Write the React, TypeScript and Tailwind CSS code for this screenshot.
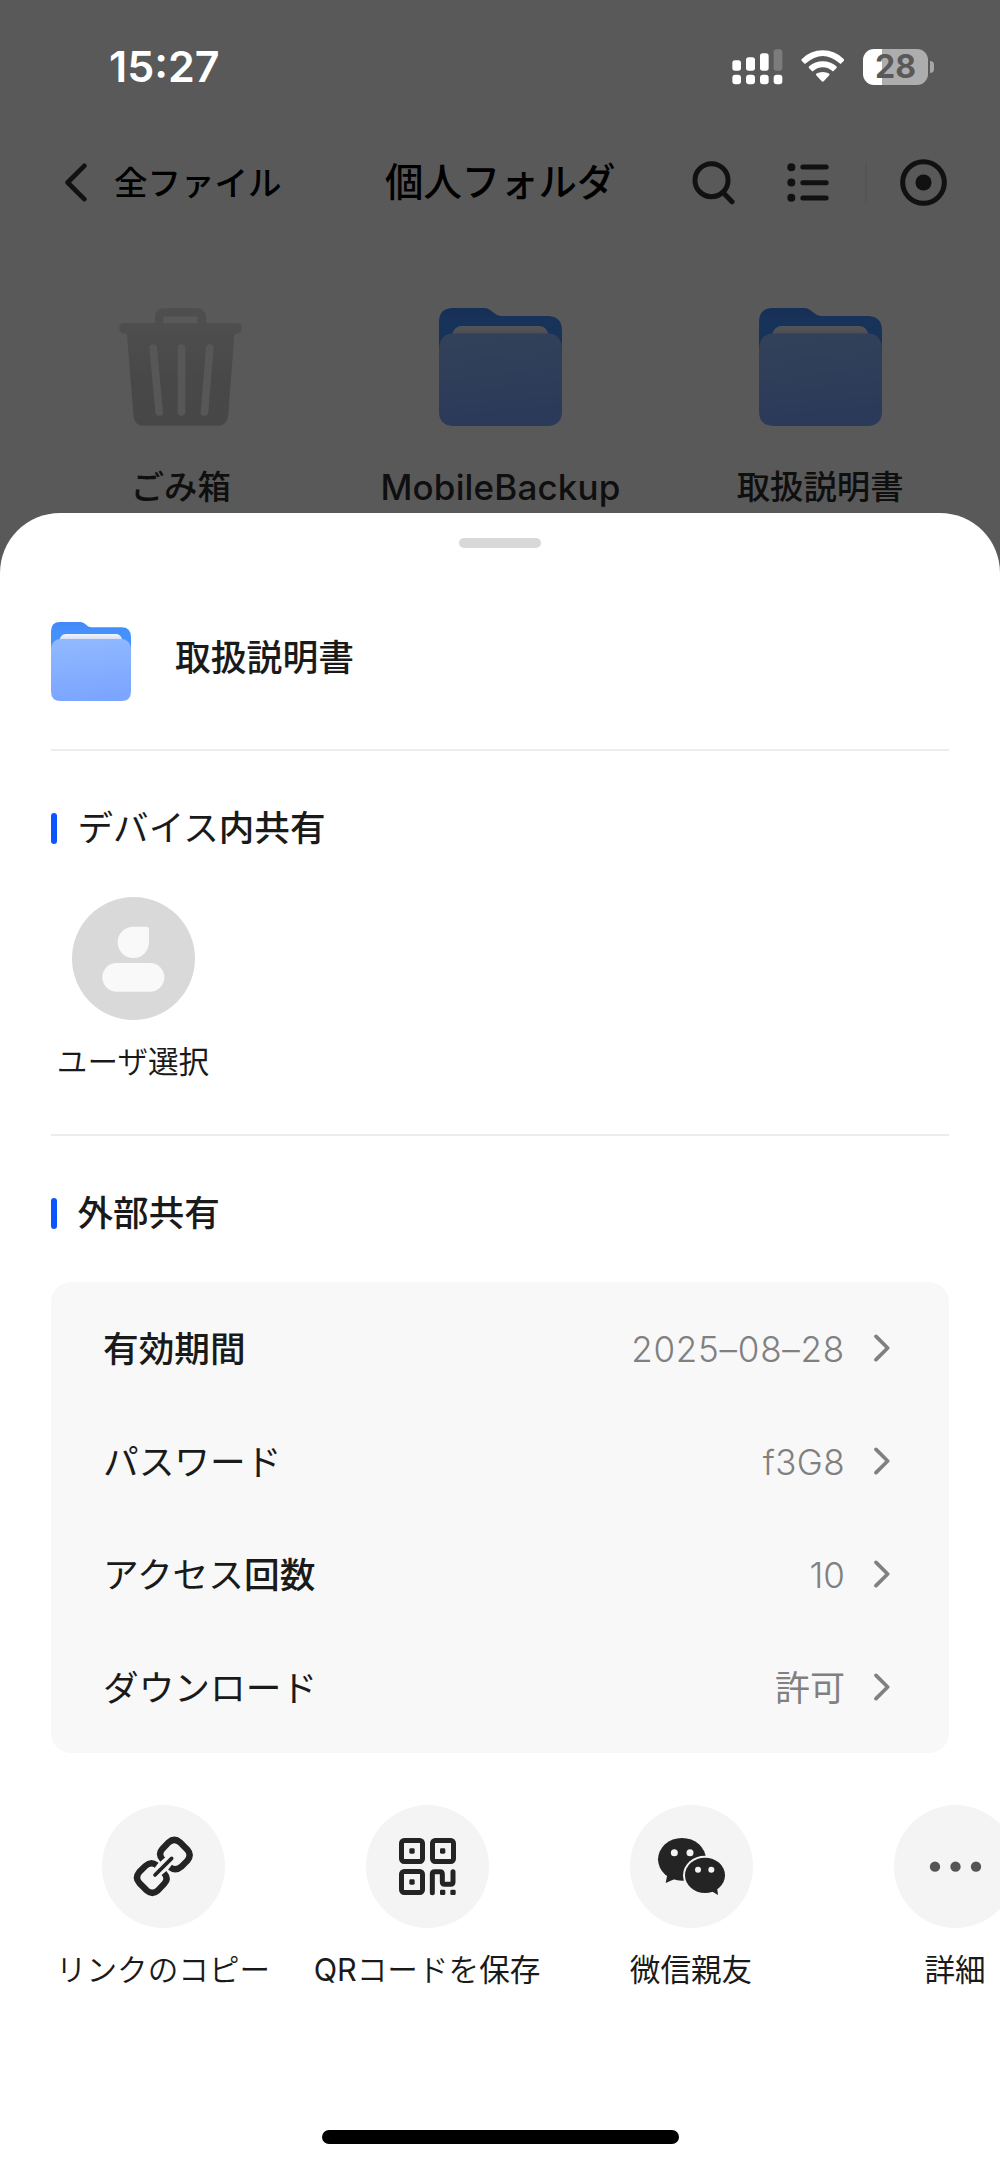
import React from 'react';

const rows = [
  { label: '有効期間', value: '2025–08–28', valueClass: 'font-[350] tracking-[0.75px]' },
  { label: 'パスワード', value: 'f3G8', valueClass: 'font-[350] tracking-[0.4px]' },
  { label: 'アクセス回数', value: '10', valueClass: 'font-[350]' },
  { label: 'ダウンロード', value: '許可', valueClass: 'font-normal' },
];

// kana runs are set one step lighter than the kanji next to them
function MixedText({ text, kanaClass }: { text: string; kanaClass: string }) {
  const parts = text.split(/([\u3040-\u30ff]+)/).filter(Boolean);
  return (
    <>
      {parts.map((part, i) => (
        <span key={i} className={/[\u3040-\u30ff]/.test(part) ? kanaClass : undefined}>{part}</span>
      ))}
    </>
  );
}

function FolderIcon({ className }: { className?: string }) {
  return (
    <svg viewBox="0 0 370 354" preserveAspectRatio="none" className={className}>
      <defs>
        <linearGradient id="folder-back" x1="0" y1="0" x2="0" y2="1">
          <stop offset="0" stopColor="#4287f5" />
          <stop offset="0.3" stopColor="#4592ff" />
        </linearGradient>
        <linearGradient id="folder-front" x1="0" y1="0" x2="0.15" y2="1">
          <stop offset="0" stopColor="#91baff" />
          <stop offset="1" stopColor="#7ca5ff" />
        </linearGradient>
        <linearGradient id="folder-paper" x1="0" y1="0" x2="0" y2="1">
          <stop offset="0" stopColor="#f0f4fc" />
          <stop offset="1" stopColor="#c9d5ee" />
        </linearGradient>
      </defs>
      <path d="M0 42Q0 0 42 0H136Q147 0 155 7L171 19Q178 24 188 24H326Q370 24 370 68V160H0Z" fill="url(#folder-back)" />
      <path d="M38 90Q42 54 68 54H302Q326 54 332 90Z" fill="url(#folder-paper)" />
      <path d="M0 120Q4 76 48 76H322Q366 76 370 120V310Q370 354 326 354H44Q0 354 0 310Z" fill="url(#folder-front)" />
    </svg>
  );
}

function TrashIcon() {
  return (
    <svg viewBox="0 0 368 354" className="w-[123px] h-[118px]">
      <defs>
        <linearGradient id="trash-body" x1="0" y1="0" x2="0" y2="1">
          <stop offset="0" stopColor="#4d4d4d" />
          <stop offset="0.5" stopColor="#484848" />
          <stop offset="1" stopColor="#474747" />
        </linearGradient>
      </defs>
      <path d="M120 50V28Q120 13 135 13H233Q248 13 248 28V50" fill="none" stroke="#4e4e4e" strokeWidth="25" />
      <path d="M12 46H356Q368 46 368 60Q366 78 346 78H22Q2 78 0 60Q0 46 12 46Z" fill="#4e4e4e" />
      <path d="M23 76H346L327 324Q323 353 298 353H71Q46 353 43 324Z" fill="url(#trash-body)" />
      <path d="M102 120L120 312M187 120V312M272 120L256 312" stroke="#575757" strokeWidth="23" strokeLinecap="round" />
    </svg>
  );
}

function StatusIcons() {
  return (
    <div className="flex items-center">
      <svg viewBox="0 0 153 108" className="w-[51px] h-[36px]" fill="#fff">
        <rect x="1" y="34" width="26" height="31" rx="8" />
        <rect x="42" y="25" width="27" height="40" rx="8" />
        <rect x="84" y="13" width="26" height="52" rx="8" />
        <rect x="125" y="1" width="26" height="64" rx="8" fill="#7c7c7c" />
        <rect x="1" y="77" width="26" height="29" rx="9" />
        <rect x="42" y="77" width="27" height="29" rx="9" />
        <rect x="84" y="77" width="26" height="29" rx="9" />
        <rect x="125" y="77" width="26" height="29" rx="9" />
      </svg>
      <svg viewBox="0 0 130 98" className="w-[43.5px] h-[32.5px] ml-[18px]" fill="#fff">
        <path d="M2 27Q28 1 65 1T128 27Q131 30 128 33L119 42Q90 18 65 18T11 42L2 33Q-1 30 2 27Z" />
        <path d="M24 49Q42 34 65 34T106 49Q109 52 106 55L96 65Q82 52 65 52T34 65L24 55Q21 52 24 49Z" />
        <path d="M46 71Q54 66 65 66T84 71Q87 74 84 77L68 94Q65 97 62 94L46 77Q43 74 46 71Z" />
      </svg>
      <div className="ml-[19px] flex items-center">
        <div className="flex h-9 w-[65px] items-center justify-center rounded-[11px] bg-[linear-gradient(90deg,#fff_29%,#adadad_29%)] text-[32px] leading-none font-bold text-[#595959]">
          28
        </div>
        <div className="ml-[2px] h-3 w-1 rounded-r-full bg-[#a6a6a6]" />
      </div>
    </div>
  );
}

function Chevron() {
  return (
    <svg viewBox="0 0 48 84" className="w-4 h-7 ml-[29px]" fill="none" stroke="#808080" strokeWidth="11" strokeLinecap="round" strokeLinejoin="round">
      <path d="M6 7L41 42L6 77" />
    </svg>
  );
}

function Action({ label, children }: { label: string; children: React.ReactNode }) {
  return (
    <div className="flex w-[264px] shrink-0 flex-col items-center">
      <div className="size-[123px] rounded-full bg-[#f4f4f4]">
        <svg viewBox="0 0 369 369" className="size-full">{children}</svg>
      </div>
      <span className="mt-[20px] text-[30.6px] leading-[44px] whitespace-nowrap text-[#1a1a1a]">
        <MixedText text={label} kanaClass="font-[350]" />
      </span>
    </div>
  );
}

function SectionTitle({ text }: { text: string }) {
  return (
    <div className="flex h-[52px] items-center">
      <div className="h-[31px] w-[5.5px] rounded-full bg-[#0b57ff]" />
      <h2 className="ml-[21px] pt-[2px] text-[35.6px] leading-[52px] font-medium">
        <MixedText text={text} kanaClass="font-normal" />
      </h2>
    </div>
  );
}

export default function App() {
  return (
    <div className="flex h-[2164px] w-[1000px] flex-col overflow-hidden bg-[#595959] font-['Inter','Noto_Sans_CJK_JP',sans-serif] text-[#1a1a1a]">
      {/* status bar + folder list behind the sheet */}
      <div className="h-[513px] shrink-0">
        <div className="flex h-[133px] items-center justify-between pr-[66px] pl-[109px]">
          <span className="text-[43px] leading-none font-semibold text-white">15:27</span>
          <StatusIcons />
        </div>

        <header className="flex h-[99px] items-center pl-[65px] text-black">
          <svg viewBox="0 0 66 116" className="w-[22px] h-[39px]" fill="none" stroke="#111" strokeWidth="14" strokeLinecap="round" strokeLinejoin="round">
            <path d="M58 8L8 58L58 108" />
          </svg>
          <span className="ml-[27px] w-[271px] pt-px text-[33.5px] font-medium">全ファイル</span>
          <h1 className="w-[307px] pt-px text-[38.4px] font-medium whitespace-nowrap">個人フォルダ</h1>
          <svg viewBox="0 0 130 134" className="w-[43px] h-[45px]" fill="none" stroke="#111" strokeWidth="15" strokeLinecap="round">
            <circle cx="59" cy="60" r="50" />
            <path d="M94 97L121 125" />
          </svg>
          <svg viewBox="0 0 126 116" className="ml-[52px] w-[42px] h-[39px]" fill="#111">
            <circle cx="13" cy="12" r="12" />
            <circle cx="13" cy="58" r="12" />
            <circle cx="13" cy="104" r="12" />
            <rect x="40" y="4" width="85" height="15" rx="7.5" />
            <rect x="40" y="51" width="85" height="15" rx="7.5" />
            <rect x="40" y="97" width="85" height="15" rx="7.5" />
          </svg>
          <div className="ml-[36px] h-10 w-[2px] bg-[#545454]" />
          <svg viewBox="0 0 140 140" className="ml-[33px] size-[47px]">
            <circle cx="70" cy="70" r="62" fill="none" stroke="#111" strokeWidth="15" />
            <circle cx="70" cy="70" r="24" fill="#111" />
          </svg>
        </header>

        <div className="grid grid-cols-3 pr-[20px] pl-[21px] pt-[76px] text-[33.4px] leading-[48px] font-medium text-[#0f0f0f]">
          <div className="flex flex-col items-center gap-[37px]">
            <TrashIcon />
            <span>ごみ箱</span>
          </div>
          <div className="flex flex-col items-center gap-[37px]">
            <FolderIcon className="w-[123px] h-[118px] brightness-[.35]" />
            <span className="text-[35px] tracking-[0.15px]">MobileBackup</span>
          </div>
          <div className="flex flex-col items-center gap-[37px]">
            <FolderIcon className="w-[123px] h-[118px] brightness-[.35]" />
            <span>取扱説明書</span>
          </div>
        </div>
      </div>

      {/* share sheet */}
      <div className="flex flex-1 flex-col rounded-t-[60px] bg-white">
        <div className="mx-auto mt-[25px] h-[10px] w-[82px] shrink-0 rounded-full bg-[#d8d8d8]" />

        <div className="px-[51px]">
          <div className="mt-[74px] flex h-[129px] items-start border-b-2 border-[#ececec]">
            <FolderIcon className="w-[80px] h-[79px]" />
            <span className="mt-[10px] ml-[44px] text-[35.8px] leading-[52px] font-medium">取扱説明書</span>
          </div>

          <div className="flex h-[385px] flex-col border-b-2 border-[#ececec] pt-[51px]">
            <SectionTitle text="デバイス内共有" />
            <div className="mt-[43px] flex w-[164px] flex-col items-center">
              <svg viewBox="0 0 369 369" className="size-[123px] rounded-full bg-[#d9d9d9]" fill="#f9f9f9">
                <path d="M184 89H223Q231 89 231 97V136A47 47 0 1 1 184 89Z" />
                <rect x="91" y="198" width="186" height="86" rx="43" />
              </svg>
              <span className="mt-[20px] text-[30.6px] leading-[44px] whitespace-nowrap">
                <MixedText text="ユーザ選択" kanaClass="font-[350]" />
              </span>
            </div>
          </div>

          <div className="pt-[51px]">
            <SectionTitle text="外部共有" />
          </div>

          <div className="mt-[43px] rounded-[20px] bg-[#f8f8f8] py-[10px] pr-[59px] pl-[52px]">
            {rows.map((row) => (
              <div key={row.label} className="flex h-[112.8px] items-center">
                <span className="flex-1 pt-[3px] text-[35.7px] font-medium">
                  <MixedText text={row.label} kanaClass="font-normal" />
                </span>
                <span className={`pt-[2px] text-[35px] text-[#808080] ${row.valueClass}`}>{row.value}</span>
                <Chevron />
              </div>
            ))}
          </div>
        </div>

        <div className="mt-[52px] ml-[31px] flex">
          <Action label="リンクのコピー">
            <g fill="none" stroke="#242424" strokeWidth="19">
              <path d="M182 164Q167 147 181 132L200 112Q217 97 234 112L256 134Q270 150 256 167L238 185Q221 200 204 187" />
              <path d="M182 164Q167 147 181 132L200 112Q217 97 234 112L256 134Q270 150 256 167L238 185Q221 200 204 187" transform="rotate(180 184 184)" />
              <path d="M159 210L209 160" strokeWidth="11" strokeLinecap="round" />
            </g>
          </Action>
          <Action label="QRコードを保存">
            <g fill="none" stroke="#242424" strokeWidth="15" strokeLinecap="round">
              <rect x="106.5" y="106.5" width="63" height="63" rx="8" />
              <rect x="199.5" y="106.5" width="63" height="63" rx="8" />
              <rect x="106.5" y="199.5" width="63" height="63" rx="8" />
              <path d="M199 263V207Q199 200 206 200H222Q229 200 229 207V231Q229 238 236 238H254Q261 238 261 231V200" />
            </g>
            <g fill="#242424">
              <rect x="130" y="130" width="16" height="16" rx="4" />
              <rect x="222" y="130" width="16" height="16" rx="4" />
              <rect x="130" y="223" width="16" height="16" rx="4" />
              <rect x="222" y="254" width="16" height="16" rx="4" />
              <rect x="253" y="254" width="16" height="16" rx="4" />
            </g>
          </Action>
          <Action label="微信親友">
            <g fill="#242424">
              <ellipse cx="156" cy="163" rx="72" ry="64" />
              <path d="M112 208L107 234L136 221Z" />
              <ellipse cx="225" cy="211" rx="66" ry="59" fill="#f4f4f4" />
              <ellipse cx="225" cy="211" rx="60" ry="53" />
              <path d="M244 258L264 270L261 246Z" />
            </g>
            <g fill="#f4f4f4">
              <circle cx="133" cy="143" r="10.5" />
              <circle cx="180" cy="143" r="10.5" />
              <circle cx="204" cy="194" r="9" />
              <circle cx="244" cy="194" r="9" />
            </g>
          </Action>
          <Action label="詳細">
            <g fill="#555">
              <circle cx="123" cy="185" r="15.5" />
              <circle cx="184.5" cy="185" r="15.5" />
              <circle cx="246" cy="185" r="15.5" />
            </g>
          </Action>
        </div>

        <div className="mx-auto mt-auto mb-[20px] h-[14px] w-[357px] shrink-0 rounded-full bg-black" />
      </div>
    </div>
  );
}
